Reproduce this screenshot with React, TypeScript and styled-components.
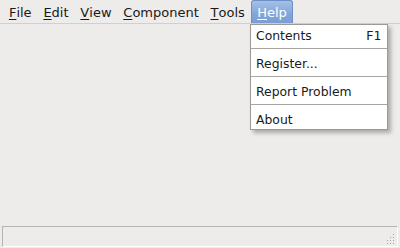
import React from "react";
import styled, { createGlobalStyle } from "styled-components";

const GlobalStyle = createGlobalStyle`
  html, body {
    margin: 0;
    padding: 0;
    background: #edecea;
  }
  body {
    font-family: "DejaVu Sans", "Liberation Sans", sans-serif;
    font-size: 12.4px;
    color: #000;
  }
`;

const Window = styled.div`
  width: 400px;
  height: 248px;
  display: flex;
  flex-direction: column;
  background: #edecea;
  position: relative;
  overflow: hidden;
`;

const MenuBar = styled.div`
  height: 24px;
  display: flex;
  align-items: flex-end;
  padding-left: 3px;
  border-bottom: 1px solid #d3d0cb;
  box-sizing: border-box;
  font-size: 13px;
`;

const MenuItem = styled.div<{ $active?: boolean }>`
  height: 23px;
  box-sizing: border-box;
  padding: ${(p) => (p.$active ? "0 5.5px" : "0 4.9px")};
  display: flex;
  align-items: center;
  color: ${(p) => (p.$active ? "#fff" : "#1a1a1a")};
  border: 1px solid ${(p) => (p.$active ? "#6b8fc6" : "transparent")};
  border-bottom: none;
  border-radius: 3px 3px 0 0;
  background: ${(p) =>
    p.$active ? "linear-gradient(#a4c0e6, #83a6d8 60%, #7b9fd3)" : "none"};
`;

const Key = styled.span`
  text-decoration: underline;
  text-underline-offset: 2px;
`;

const Content = styled.div`
  flex: 1;
`;

const StatusBar = styled.div`
  height: 21px;
  margin: 0 2px 1px 2px;
  box-sizing: border-box;
  border-top: 1px solid #b7b4af;
  border-left: 1px solid #b7b4af;
  border-right: 1px solid #ffffff;
  border-bottom: 1px solid #ffffff;
  display: flex;
  justify-content: flex-end;
  align-items: flex-end;
  padding: 0 2px 2px 0;
`;

const Popup = styled.div`
  position: absolute;
  left: 250px;
  top: 24px;
  width: 138px;
  box-sizing: border-box;
  background: #fff;
  border: 1px solid #9d9a96;
  box-shadow: 3px 3px 4px rgba(0, 0, 0, 0.28);
  display: flex;
  flex-direction: column;
`;

const PopupItem = styled.div`
  height: 20px;
  display: flex;
  align-items: center;
  justify-content: space-between;
  padding: 0 6px 0 5px;
  color: #1a1a1a;
`;

const Separator = styled.div`
  height: 1px;
  margin: 3px 0 4px;
  background: #a9a6a2;
`;

const Shortcut = styled.span`
  font-family: "DejaVu Sans Mono", monospace;
`;

const Grip = () => (
  <svg width="10" height="10" viewBox="0 0 10 10">
    {[
      [8, 0],
      [8, 3],
      [5, 3],
      [8, 6],
      [5, 6],
      [2, 6],
      [8, 9],
      [5, 9],
      [2, 9],
    ].map(([x, y], i) => (
      <rect key={i} x={x} y={y} width="1" height="1" fill="#a8a5a0" />
    ))}
  </svg>
);

const menus = [
  { key: "F", rest: "ile" },
  { key: "E", rest: "dit" },
  { key: "V", rest: "iew" },
  { key: "C", rest: "omponent" },
  { key: "T", rest: "ools" },
  { key: "H", rest: "elp", active: true },
];

export default function App() {
  return (
    <>
      <GlobalStyle />
      <Window>
        <MenuBar>
          {menus.map((m) => (
            <MenuItem key={m.key} $active={m.active}>
              <Key>{m.key}</Key>
              {m.rest}
            </MenuItem>
          ))}
        </MenuBar>
        <Content />
        <StatusBar>
          <Grip />
        </StatusBar>
        <Popup>
          <PopupItem>
            <span>Contents</span>
            <Shortcut>F1</Shortcut>
          </PopupItem>
          <Separator />
          <PopupItem>Register...</PopupItem>
          <Separator />
          <PopupItem>Report Problem</PopupItem>
          <Separator />
          <PopupItem>About</PopupItem>
        </Popup>
      </Window>
    </>
  );
}
